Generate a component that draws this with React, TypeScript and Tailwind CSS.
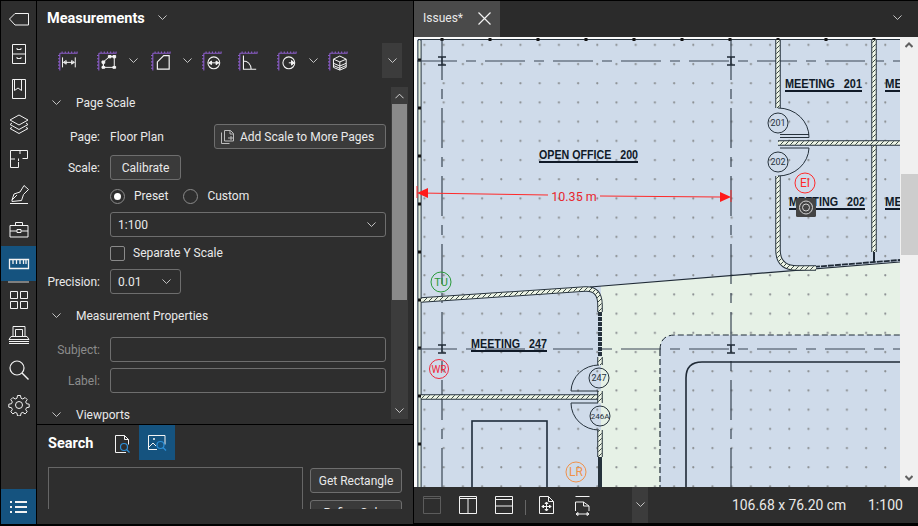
import React from "react";

const S = { fill: "none", stroke: "#f2f2f2", strokeWidth: 1 } as const;

function RailIcon({ children, active, h = 35 }: { children: React.ReactNode; active?: boolean; h?: number }) {
  return (
    <div className={`flex w-[35px] items-center justify-center ${active ? "bg-[#15537f]" : ""} ${h === 34 ? "h-[34px]" : "h-[35px]"}`}>
      <svg width="22" height="22" viewBox="0 0 22 22" {...S}>{children}</svg>
    </div>
  );
}

function Rail() {
  return (
    <div className="flex w-[37px] shrink-0 flex-col border-r border-l border-black bg-[#2e2e2e]">
      <RailIcon><path d="M20.500 5.500H7L1.500 11 7 17h13.500z" /></RailIcon>
      <RailIcon><path d="M4.500 1.500h13v19h-13zM4.500 11h13M9 5v1.500h4V5M9 14v1.500h4V14" /></RailIcon>
      <RailIcon><path d="M4.500 1.500h13v19h-13zM6.500 1.500h7v11l-3.500-2.500-3.500 2.500z" /></RailIcon>
      <RailIcon><path d="M11 2l9 5-9 5-9-5zM4 10l-2 1.500 9 5 9-5-2-1.500M4 14.500l-2 1 9 5 9-5-2-1" /></RailIcon>
      <RailIcon><path d="M2.500 2.500h17v8h-5M12 2.500V6M2.500 2.500V19.500h8V14M2.500 11H7M10.500 10.500V13" /></RailIcon>
      <RailIcon><path d="M2 20.500h18M4 17l2-6 6-2 4-6.500 4.500 4-5 5-2 6-9.500 1zM4 17l5-5" /></RailIcon>
      <RailIcon><path d="M2 7.500h18v11.500H2zM7.500 7.500V4.500h7v3M2 13h7M13 13h7M9 11.500h4v3H9z" /></RailIcon>
      <RailIcon active><path d="M1.500 6.500h19v9h-19zM5 6.500V11M8.500 6.500V11M12 6.500V11M15.500 6.500V11M18 6.500V11" strokeWidth="1.300" /></RailIcon>
      <div className="ml-[7px] h-[2px] w-[21px] bg-[#7f7f7f]" />
      <RailIcon h={34}><path d="M2.500 2.500h7v7h-7zM12.500 2.500h7v7h-7zM2.500 12.500h7v7h-7zM12.500 12.500h7v7h-7z" /></RailIcon>
      <RailIcon><path d="M5 2.500h12v10H5zM7.500 5.500h7M3 12.500h16l2 3H1zM1 17.500h20M1 19.500h20M7.500 5.500v7M14.500 5.500v7" /></RailIcon>
      <RailIcon><circle cx="9" cy="9" r="7" strokeWidth="1.200" /><path d="M14 14l6.500 6.500" strokeWidth="1.400" /></RailIcon>
      <RailIcon>
        <circle cx="11" cy="11" r="3.500" />
        <path d="M9.500 1.500h3l.5 2.700 1.800.8 2.300-1.500 2.100 2.100-1.500 2.300.8 1.800 2.700.5v3l-2.700.5-.8 1.800 1.500 2.300-2.100 2.100-2.300-1.500-1.800.8-.5 2.700h-3l-.5-2.700-1.800-.8-2.300 1.500-2.100-2.100 1.500-2.300-.8-1.800-2.700-.5v-3l2.700-.5.8-1.800-1.500-2.300 2.100-2.100 2.300 1.500 1.800-.8z" />
      </RailIcon>
      <div className="flex-1" />
      <div className="flex h-[35px] w-[35px] items-center justify-center bg-[#15537f]">
        <svg width="18" height="14" viewBox="0 0 18 14" fill="#f2f2f2"><path d="M0 1h2v2H0zM5 1h12v2H5zM0 6h2v2H0zM5 6h12v2H5zM0 11h2v2H0zM5 11h12v2H5z" /></svg>
      </div>
    </div>
  );
}

function Chevron({ w = 9, c = "#d5d5d5", sw = 1 }: { w?: number; c?: string; sw?: number }) {
  return (
    <svg width={w} height={w * 0.6} viewBox="0 0 10 6" fill="none" stroke={c} strokeWidth={sw} className="shrink-0"><path d="M.5.5 5 5 9.500.5" /></svg>
  );
}

function RulerTool({ children }: { children: React.ReactNode }) {
  return (
    <svg width="20" height="20" viewBox="0 0 22 22" fill="none" className="shrink-0">
      <path d="M2 2.500h19.500M2 2.500v19M4.500.5v2M8 .5v2M11.500.5v2M15 .5v2M18.500.5v2M21 .5v2M0 5h2M0 8.500h2M0 12h2M0 15.500h2M0 19h2" stroke="#8a5cc8" strokeWidth="1.200" />
      <g stroke="#f4f4f4" fill="none" strokeWidth="1.100">{children}</g>
    </svg>
  );
}

function Toolbar() {
  return (
    <div className="mt-[8px] flex h-[35px] items-center pl-[21px]">
      <RulerTool><path d="M5 7v11M19 7v11M6 12.500h12M6 12.500l3-2v4zM18 12.500l-3-2v4z" /></RulerTool>
      <div className="w-[19px]" />
      <RulerTool><path d="M7 18h12V6h-5L7 12zM7 18v-6" /><path d="M5.500 11h3v2.500h-3zM5.500 17h3v2h-3zM17.500 17h3v2h-3zM17.500 5h3v2.500h-3zM12.500 5h3v2.500h-3z" fill="#f4f4f4" /></RulerTool>
      <div className="ml-[12px]"><Chevron /></div>
      <div className="w-[13px]" />
      <RulerTool><path d="M7 20V12l7-7h6v15z" strokeWidth="1.300" /></RulerTool>
      <div className="ml-[12px]"><Chevron /></div>
      <div className="w-[10px]" />
      <RulerTool><circle cx="13" cy="13" r="6.500" strokeWidth="1.200" /><path d="M7.500 13h11M7.500 13l3-2v4zM18.500 13l-3-2v4z" fill="#f4f4f4" /></RulerTool>
      <div className="w-[16px]" />
      <RulerTool><path d="M6 5v15h14M6 11c4.500 0 8 3.500 8.500 9" strokeWidth="1.200" /></RulerTool>
      <div className="w-[19px]" />
      <RulerTool><circle cx="13" cy="13" r="6.500" strokeWidth="1.200" /><path d="M13 13h6M16 10.500l3 2.500-3 2.500z" fill="#f4f4f4" /></RulerTool>
      <div className="ml-[12px]"><Chevron /></div>
      <div className="w-[10px]" />
      <RulerTool><path d="M6 9l7-3.500L20 9v9l-7 3-7-3zM6 9l7 3 7-3M13 12v9M6 13.500l7 3 7-3M6 16l7 3 7-3" /></RulerTool>
      <div className="ml-[34px] flex h-[35px] w-[20px] items-center justify-center bg-[#3c3c3c]"><Chevron /></div>
    </div>
  );
}

function Section({ label, cls }: { label: string; cls: string }) {
  return (
    <div className={`flex h-[24px] items-center pl-[15px] ${cls}`}>
      <Chevron />
      <span className="ml-[15px] text-[12px] text-[#e9e9e9]">{label}</span>
    </div>
  );
}

function Label({ children, dim }: { children: React.ReactNode; dim?: boolean }) {
  return <span className={`w-[63px] shrink-0 text-right text-[12px] ${dim ? "text-[#8c8c8c]" : "text-[#e9e9e9]"}`}>{children}</span>;
}

function Settings() {
  return (
    <div className="mt-[9px] flex h-[337px] items-start overflow-hidden">
      <div className="w-[354px] shrink-0 pt-[4px]">
        <Section label="Page Scale" cls="" />
        <div className="mt-[9px] flex h-[25px] items-center">
          <Label>Page:</Label>
          <span className="ml-[10px] w-[104px] text-[12px] text-[#e9e9e9]">Floor Plan</span>
          <button className="flex h-[25px] w-[172px] items-center rounded-[3px] border border-[#6e6e6e] bg-[#3a3a3a] pl-[5px] text-[12px] text-[#e9e9e9]">
            <svg width="16" height="16" viewBox="0 0 16 16" fill="none" stroke="#bdbdbd"><path d="M1.500 3.500v11h8M4.500 12V1.500h6l3 3V12zM10 1.500v3.500h3.500M8 9h6M11 7v4" /></svg>
            <span className="ml-[4px]">Add Scale to More Pages</span>
          </button>
        </div>
        <div className="mt-[6px] flex h-[25px] items-center">
          <Label>Scale:</Label>
          <button className="ml-[10px] h-[25px] w-[71px] rounded-[3px] border border-[#6e6e6e] bg-[#3a3a3a] text-[12px] text-[#e9e9e9]">Calibrate</button>
        </div>
        <div className="ml-[73px] mt-[6px] flex h-[20px] items-center text-[12px] text-[#e9e9e9]">
          <span className="flex h-[15px] w-[15px] items-center justify-center rounded-full border border-[#8a8a8a]"><span className="h-[7px] w-[7px] rounded-full bg-white" /></span>
          <span className="ml-[9px]">Preset</span>
          <span className="ml-[15px] h-[15px] w-[15px] rounded-full border border-[#8a8a8a]" />
          <span className="ml-[9px]">Custom</span>
        </div>
        <div className="ml-[73px] mt-[6px] flex h-[25px] w-[276px] items-center justify-between rounded-[3px] border border-[#6e6e6e] px-[7px] text-[12px] text-[#e9e9e9]">
          <span>1:100</span><span className="mr-[2px]"><Chevron /></span>
        </div>
        <div className="ml-[73px] mt-[6px] flex h-[20px] items-center text-[12px] text-[#e9e9e9]">
          <span className="h-[15px] w-[15px] rounded-[2px] border border-[#8a8a8a]" />
          <span className="ml-[8px]">Separate Y Scale</span>
        </div>
        <div className="mt-[6px] flex h-[25px] items-center">
          <Label>Precision:</Label>
          <div className="ml-[10px] flex h-[25px] w-[71px] items-center justify-between rounded-[3px] border border-[#6e6e6e] px-[7px] text-[12px] text-[#e9e9e9]">
            <span>0.01</span><span className="mr-[2px]"><Chevron /></span>
          </div>
        </div>
        <Section label="Measurement Properties" cls="mt-[10px]" />
        <div className="mt-[9px] flex h-[25px] items-center">
          <Label dim>Subject:</Label>
          <div className="ml-[10px] h-[25px] w-[276px] rounded-[3px] border border-[#6e6e6e]" />
        </div>
        <div className="mt-[6px] flex h-[25px] items-center">
          <Label dim>Label:</Label>
          <div className="ml-[10px] h-[25px] w-[276px] rounded-[3px] border border-[#6e6e6e]" />
        </div>
        <Section label="Viewports" cls="mt-[10px]" />
      </div>
      <div className="flex h-[332px] w-[17px] shrink-0 flex-col items-center bg-[#3c3c3c]">
        <div className="flex h-[17px] items-center justify-center"><svg width="9" height="6" viewBox="0 0 10 6" fill="none" stroke="#e5e5e5"><path d="M.5 5.500 5 1l4.500 4.500" /></svg></div>
        <div className="h-[196px] w-[15px] bg-[#8a8a8a]" />
        <div className="flex-1" />
        <div className="flex h-[17px] items-center justify-center"><Chevron /></div>
      </div>
    </div>
  );
}

function SearchPanel() {
  return (
    <div className="flex-1 border-t border-black">
      <div className="h-[84px] overflow-hidden">
        <div className="flex h-[35px] items-center pl-[11px]">
          <span className="mt-[4px] w-[46px] text-[14.500px] font-bold leading-none text-white">Search</span>
          <svg width="18" height="20" viewBox="0 0 18 20" fill="none" className="ml-[20px] mt-[2px]">
            <path d="M12 18.500H1.500V1.500h9l4 4v5" stroke="#f4f4f4" /><path d="M10.500 1.500v4h4" stroke="#f4f4f4" />
            <circle cx="10" cy="13" r="3.500" stroke="#2b8fd8" strokeWidth="1.200" /><path d="M12.500 15.500l3 3" stroke="#2b8fd8" strokeWidth="1.300" />
          </svg>
          <div className="ml-[7px] flex h-[35px] w-[36px] items-center justify-center bg-[#15537f]">
            <svg width="20" height="18" viewBox="0 0 20 18" fill="none">
              <path d="M10 15.500H1.500V1.500h16.500v9" stroke="#f4f4f4" /><path d="M2 13l4-4 3 3" stroke="#f4f4f4" /><circle cx="7" cy="5" r="1" fill="#f4f4f4" />
              <circle cx="13.500" cy="11" r="3.500" stroke="#2b8fd8" strokeWidth="1.200" /><path d="M16 13.500l3 3" stroke="#2b8fd8" strokeWidth="1.300" />
            </svg>
          </div>
        </div>
        <div className="ml-[11px] mt-[7px] flex">
          <div className="h-[60px] w-[255px] shrink-0 border border-b-0 border-[#666]" />
          <div className="ml-[7px] flex w-[92px] shrink-0 flex-col">
            <button className="mt-[1px] h-[25px] w-[92px] rounded-[3px] border border-[#6e6e6e] bg-[#3a3a3a] text-[12px] text-[#e9e9e9]">Get Rectangle</button>
            <button className="mt-[7px] h-[25px] w-[92px] rounded-[3px] border border-[#6e6e6e] bg-[#3a3a3a] text-[12px] text-[#e9e9e9]">Refine Color</button>
          </div>
        </div>
      </div>
    </div>
  );
}

function LeftPanel() {
  return (
    <div className="flex w-[377px] shrink-0 flex-col border-r border-black bg-[#2e2e2e]">
      <div className="flex h-[34px] items-center pl-[10px]">
        <span className="mt-[2px] text-[14.500px] font-bold leading-none text-white">Measurements</span>
        <span className="ml-[13px]"><Chevron /></span>
      </div>
      <Toolbar />
      <Settings />
      <SearchPanel />
    </div>
  );
}

function Wall({ d }: { d: string }) {
  return (
    <g fill="none">
      <path d={d} stroke="#26323c" strokeWidth="5.500" />
      <path d={d} stroke="#edf4e6" strokeWidth="3.500" />
      <path d={d} stroke="url(#hatch)" strokeWidth="3.500" />
    </g>
  );
}

function Mark({ x, y }: { x: number; y: number }) {
  return <path d={`M${x - 4} ${y - 4}h8M${x - 4} ${y + 4}h8M${x} ${y - 4}v8`} stroke="#1f2a36" strokeWidth="1.300" fill="none" />;
}

function Bubble({ x, y, t, fs = 9 }: { x: number; y: number; t: string; fs?: number }) {
  return (
    <g>
      <circle cx={x} cy={y} r="10" fill="none" stroke="#26323c" />
      <text x={x} y={y + 3} textAnchor="middle" fontSize={fs} fill="#26323c" fontFamily="Roboto, sans-serif">{t}</text>
    </g>
  );
}

function Stamp({ x, y, t, c, fs = 12, r = 10 }: { x: number; y: number; t: string; c: string; fs?: number; r?: number }) {
  return (
    <g>
      <circle cx={x} cy={y} r={r} fill="none" stroke={c} />
      <text x={x} y={y + fs * 0.36} textAnchor="middle" fontSize={fs} fill={c} fontFamily="Roboto, sans-serif">{t}</text>
    </g>
  );
}

function RoomLabel({ x, y, w, ul, t }: { x: number; y: number; w: number; ul: number; t: string }) {
  return (
    <g>
      <text x={x} y={y} fontSize="13" fontWeight="700" fill="#101a28" textLength={w} lengthAdjust="spacingAndGlyphs" fontFamily="'Liberation Sans', sans-serif">{t}</text>
      <path d={`M${x} ${y + 3}h${ul}`} stroke="#101a28" strokeWidth="2" />
    </g>
  );
}

const topSquares = [442, 490, 538, 586, 634, 682, 730, 778, 826, 874];
const leftSquares = [60, 108, 156, 204, 252, 300, 348, 396, 444];

function Plan() {
  return (
    <svg viewBox="414 37 486 450" className="block h-[450px] w-[486px]">
      <defs>
        <pattern id="dots" x="423.300" y="43.700" width="19.200" height="19.200" patternUnits="userSpaceOnUse">
          <circle cx="1.200" cy="1.200" r="1.100" fill="#8b8f92" />
        </pattern>
        <pattern id="hatch" width="5" height="5" patternUnits="userSpaceOnUse">
          <path d="M-1 6L6 -1" stroke="#3c4a45" strokeWidth="1" />
        </pattern>
      </defs>
      <rect x="414" y="37" width="486" height="450" fill="#cfdbea" />
      <path d="M601 286L900 262V335H675Q660 335 660 350V487H601z" fill="#e6f1e6" />
      <rect x="414" y="37" width="486" height="450" fill="url(#dots)" />
      <rect x="414" y="37" width="3" height="450" fill="#fbfbfb" />
      <rect x="417" y="37" width="483" height="2" fill="#fbfbfb" />
      <path d="M418 40V487M421 40V487M418 39.500H900" stroke="#26323c" strokeWidth="1.200" fill="none" />
      <path d="M419.500 41V487" stroke="#dfead9" strokeWidth="1.800" />
      {topSquares.map((x) => <rect key={x} x={x - 1.500} y="38" width="3" height="3" fill="#111" />)}
      {leftSquares.map((y) => <rect key={y} x="418" y={y - 1.500} width="3" height="3" fill="#111" />)}

      <path d="M442 40V487M731 40V487" stroke="#3a4654" strokeWidth="1.200" strokeDasharray="40 9 10 9" fill="none" />
      <path d="M417 61H900M417 349H900" stroke="#3a4654" strokeWidth="1.200" strokeDasharray="40 9 10 9" fill="none" />
      <Mark x={442} y={61} /><Mark x={731} y={61} /><Mark x={442} y={349} /><Mark x={731} y={349} />

      <path d="M590 287L900 262" stroke="#1f2a36" strokeWidth="1.200" />
      <path d="M800 268L900 260" stroke="#1f2a36" strokeWidth="1.800" strokeDasharray="6 1" />
      <path d="M660 350Q660 335 675 335H900" stroke="#1f2a36" strokeWidth="1" strokeDasharray="6 3" fill="none" />
      <path d="M660 350V487" stroke="#1f2a36" strokeWidth="1.200" strokeDasharray="6 3" fill="none" />
      <path d="M686 487V378Q686 362 702 362H900" stroke="#1f2a36" strokeWidth="1.600" fill="none" />

      <Wall d="M778 40V108" />
      <Wall d="M874 40V252" />
      <Wall d="M778 143H900" />
      <Wall d="M778 176V250Q778 268 797 268H816" />
      <path d="M874 252V262" stroke="#1f2a36" strokeWidth="2" />
      <Wall d="M421 300L585 289Q600 288 600 305V312" />
      <path d="M600 312V357" stroke="#26323c" strokeWidth="4" strokeDasharray="4 1" />
      <Wall d="M600 357V365" />
      <Wall d="M421 397H600" />
      <Wall d="M600 391V403" />
      <Wall d="M600 430V457" />
      <path d="M600 457V487" stroke="#26323c" strokeWidth="4" />

      <path d="M778 108A31 29 0 0 1 809 137.500H780M780 134.500H809M809 148H780M809 148A31 29 0 0 1 778 176" fill="none" stroke="#26323c" />
      <path d="M599 365A28 27 0 0 0 571 391H598M571 403H598M599 430A28 27 0 0 1 571 403" fill="none" stroke="#26323c" />
      <rect x="472" y="421" width="75" height="80" fill="none" stroke="#1d2b3a" strokeWidth="1.600" />

      <Bubble x={778} y={123} t="201" /><Bubble x={778} y={162} t="202" />
      <Bubble x={599} y={378} t="247" /><Bubble x={600} y={416} t="246A" fs={8} />

      <RoomLabel x={539} y={159} w={99} ul={99} t={"OPEN OFFICE\u00a0\u00a0\u00a0200"} />
      <RoomLabel x={785} y={88} w={77} ul={77} t={"MEETING\u00a0\u00a0\u00a0201"} />
      <RoomLabel x={885} y={88} w={17} ul={15} t="ME" />
      <RoomLabel x={789} y={206} w={76} ul={76} t={"MEETING\u00a0\u00a0\u00a0202"} />
      <RoomLabel x={885} y={206} w={17} ul={15} t="ME" />
      <RoomLabel x={471} y={348} w={76} ul={76} t={"MEETING\u00a0\u00a0\u00a0247"} />

      <path d="M420 193L548 195M600 196L720 197" stroke="#ff2a2a" />
      <path d="M417 193l11-5v10zM731 197l-11-5v10z" fill="#ff1a1a" />
      <path d="M417 186v12M731 190v12" stroke="#ff2a2a" />
      <text x="574" y="201" textAnchor="middle" fontSize="12.500" fill="#e8262c" fontFamily="Roboto, sans-serif">10.35 m</text>

      <Stamp x={805} y={183} t="EI" c="#ff2a2a" />
      <Stamp x={441} y={282} t="TU" c="#2a9a3a" fs={11} />
      <Stamp x={439} y={369} t="WR" c="#f0283c" fs={10} r={9.500} />
      <Stamp x={576} y={472} t="LR" c="#f0914a" fs={12} />

      <rect x="796" y="198" width="20" height="19" rx="1.500" fill="#444" />
      <circle cx="806" cy="207.500" r="6.500" fill="none" stroke="#d5d5d5" />
      <circle cx="806" cy="207.500" r="3.500" fill="none" stroke="#d5d5d5" />
    </svg>
  );
}

function Bar() {
  const ic = { fill: "none", stroke: "#f2f2f2" } as const;
  return (
    <div className="flex h-[36px] items-center bg-[#2e2e2e] pl-[9px]">
      <svg width="18" height="18" viewBox="0 0 18 18" fill="none" stroke="#5c5c5c"><path d="M.5.5h17v17H.500zM.5 2.500h17" /></svg>
      <svg width="18" height="18" viewBox="0 0 18 18" {...ic} className="ml-[18px]"><path d="M.5.5h17v17H.500zM.5 2.500h17M9 2.500v15" /></svg>
      <svg width="18" height="18" viewBox="0 0 18 18" {...ic} className="ml-[18px]"><path d="M.5.5h17v17H.500zM.5 3.500h17M.5 10h17" /></svg>
      <div className="ml-[12px] mt-[4px] h-[15px] w-px bg-[#666]" />
      <svg width="16" height="18" viewBox="0 0 16 18" {...ic} className="ml-[13px]"><path d="M.5.5h9l5 5v12H.5zM9.500.5v5h5M7.500 6v9M3 10.500h9M7.500 6l-1.500 1.500h3zM7.500 15l-1.500-1.500h3zM3 10.500L4.500 9v3zM12 10.500L10.500 9v3z" /></svg>
      <svg width="16" height="20" viewBox="0 0 16 20" {...ic} className="ml-[20px] mt-[1px]"><path d="M.5.5h14M.5 15V6h8l5.500 4v5M8.500 6v4H14M1 18h13M1 18l2-1.500v3zM14 18l-2-1.500v3z" /></svg>
      <div className="ml-[41px] flex h-[36px] w-[16px] items-center justify-center bg-[#3c3c3c]"><Chevron /></div>
      <span className="ml-[84px] w-[115px] whitespace-nowrap text-[13.900px] text-[#e9e9e9]">106.68 x 76.20 cm</span>
      <span className="ml-[21px] text-[14px] text-[#e9e9e9]">1:100</span>
    </div>
  );
}

function RightPanel() {
  return (
    <div className="flex min-w-0 flex-1 flex-col">
      <div className="flex h-[36px] items-center bg-[#2b2b2b]">
        <div className="flex h-[36px] w-[86px] items-center bg-[#4a4a4a] pb-[2px] pl-[9px]">
          <span className="text-[12px] text-[#e9e9e9]">Issues*</span>
          <svg width="13" height="13" viewBox="0 0 13 13" fill="none" stroke="#f2f2f2" className="ml-[15px]"><path d="M.5.5l12 12M12.500.5l-12 12" strokeWidth="1.200" /></svg>
        </div>
        <div className="flex-1" />
        <span className="mb-[2px] mr-[16px]"><Chevron /></span>
      </div>
      <div className="flex h-[450px]">
        <Plan />
        <div className="flex w-[18px] flex-col items-center bg-[#f0f0f0]">
          <div className="mt-[5px] h-[6px]"><svg width="8" height="6" viewBox="0 0 8 6" fill="none" stroke="#606060" strokeWidth="2"><path d="M.5 5 4 1.500 7.500 5" /></svg></div>
          <div className="mt-[126px] h-[81px] w-[17px] bg-[#cdcdcd]" />
          <div className="flex-1" />
          <div className="mb-[6px] h-[6px]"><svg width="8" height="6" viewBox="0 0 8 6" fill="none" stroke="#606060" strokeWidth="2"><path d="M.5 1 4 4.500 7.500 1" /></svg></div>
        </div>
      </div>
      <Bar />
    </div>
  );
}

export default function App() {
  return (
    <div className="h-[526px] w-[918px] overflow-hidden bg-black pt-px font-['Roboto',sans-serif]">
      <div className="flex h-[523px]">
        <Rail />
        <LeftPanel />
        <RightPanel />
      </div>
    </div>
  );
}
